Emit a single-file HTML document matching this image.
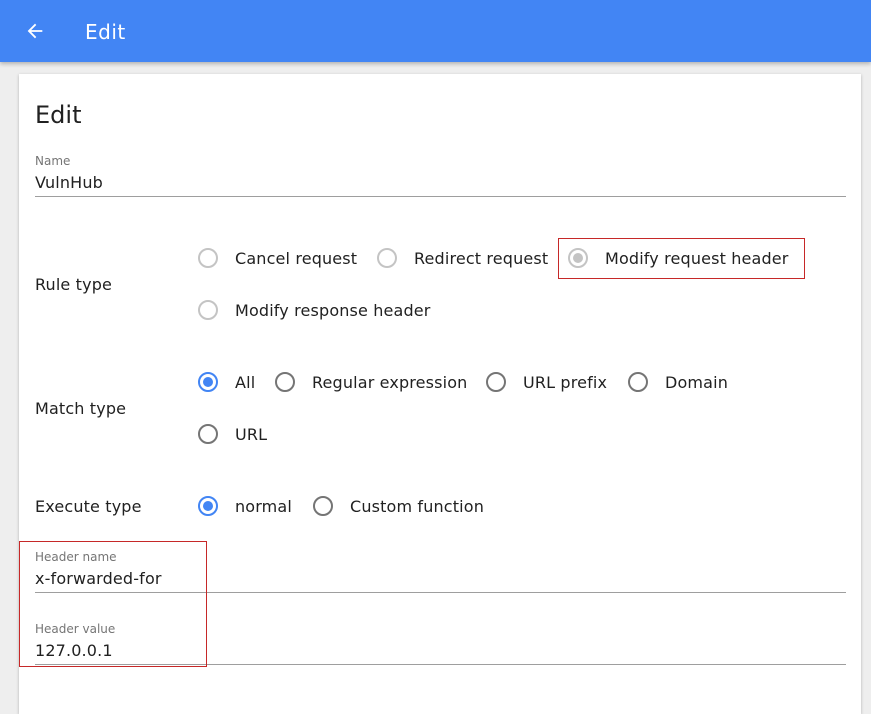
<!DOCTYPE html>
<html><head><meta charset="utf-8"><style>
*{margin:0;padding:0;box-sizing:border-box}
body{width:871px;height:690px;overflow:hidden;background:#eeeeee;font-family:"DejaVu Sans","Liberation Sans",sans-serif;color:#212121;position:relative}
.bar{position:absolute;left:0;top:0;width:871px;height:62px;background:#4285f4;box-shadow:0 2px 4px rgba(0,0,0,.25)}
.bar .t{position:absolute;left:85px;top:20px;font-size:20px;color:#fff;line-height:24px;letter-spacing:.5px}
.card{position:absolute;left:19px;top:74px;width:842px;height:640px;background:#fff;box-shadow:0 1px 3px rgba(0,0,0,.25)}
.a{position:absolute;white-space:nowrap;line-height:20px;font-size:16px;letter-spacing:.15px;margin-top:1px}
.r{position:absolute;width:20px;height:20px;border-radius:50%;border:2px solid #757575}
.r.l{border-color:#c4c4c4}
.r.s{border-color:#4285f4}
.r.s::after{content:"";position:absolute;left:3px;top:3px;width:10px;height:10px;border-radius:50%;background:#4285f4}
.r.g::after{content:"";position:absolute;left:3px;top:3px;width:10px;height:10px;border-radius:50%;background:#c4c4c4}
.lab{position:absolute;font-size:12px;color:#757575;line-height:14px;margin-top:1px}
.line{position:absolute;left:35px;width:811px;height:1px;background:#9e9e9e}
.box{position:absolute;border:1px solid #c62828}
</style></head><body>
<div class="bar">
<svg style="position:absolute;left:24px;top:20px" width="22" height="22" viewBox="0 0 24 24"><path d="M20 11H7.83l5.59-5.59L12 4l-8 8 8 8 1.41-1.41L7.83 13H20v-2z" fill="#fff"/></svg>
<div class="t">Edit</div></div>
<div class="card"></div>
<div class="a" style="left:35px;top:99px;font-size:24px;line-height:30px;letter-spacing:0">Edit</div>
<div class="lab" style="left:35px;top:153px">Name</div>
<div class="a" style="left:35px;top:172px">VulnHub</div>
<div class="line" style="top:196px"></div>

<div class="a" style="left:35px;top:274px">Rule type</div>
<div class="r l" style="left:198px;top:248px"></div><div class="a" style="left:235px;top:248px">Cancel request</div>
<div class="r l" style="left:377px;top:248px"></div><div class="a" style="left:414px;top:248px">Redirect request</div>
<div class="r l g" style="left:568px;top:248px"></div><div class="a" style="left:605px;top:248px">Modify request header</div>
<div class="box" style="left:558px;top:238px;width:247px;height:41px"></div>
<div class="r l" style="left:198px;top:300px"></div><div class="a" style="left:235px;top:300px">Modify response header</div>

<div class="a" style="left:35px;top:398px">Match type</div>
<div class="r s" style="left:198px;top:372px"></div><div class="a" style="left:235px;top:372px">All</div>
<div class="r" style="left:275px;top:372px"></div><div class="a" style="left:312px;top:372px">Regular expression</div>
<div class="r" style="left:486px;top:372px"></div><div class="a" style="left:523px;top:372px">URL prefix</div>
<div class="r" style="left:628px;top:372px"></div><div class="a" style="left:665px;top:372px">Domain</div>
<div class="r" style="left:198px;top:424px"></div><div class="a" style="left:235px;top:424px">URL</div>

<div class="a" style="left:35px;top:496px">Execute type</div>
<div class="r s" style="left:198px;top:496px"></div><div class="a" style="left:235px;top:496px">normal</div>
<div class="r" style="left:313px;top:496px"></div><div class="a" style="left:350px;top:496px">Custom function</div>

<div class="lab" style="left:35px;top:549px">Header name</div>
<div class="a" style="left:35px;top:568px">x-forwarded-for</div>
<div class="line" style="top:592px"></div>
<div class="lab" style="left:35px;top:621px">Header value</div>
<div class="a" style="left:35px;top:640px">127.0.0.1</div>
<div class="line" style="top:664px"></div>
<div class="box" style="left:19px;top:541px;width:188px;height:126px"></div>
</body></html>
